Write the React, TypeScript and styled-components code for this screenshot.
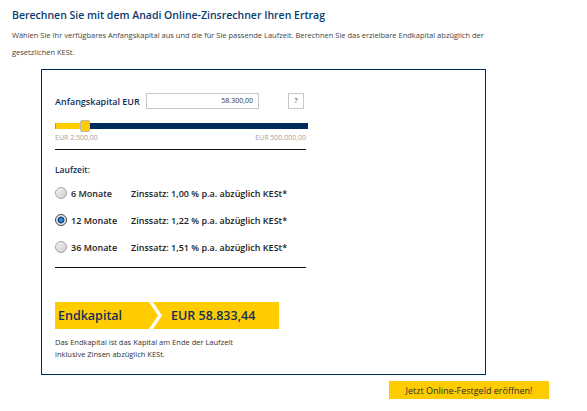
import React from "react";
import styled, { createGlobalStyle } from "styled-components";

const GlobalStyle = createGlobalStyle`
  html, body { margin: 0; padding: 0; background: #ffffff; }
  body { font-family: "Open Sans", "Noto Sans", Arial, sans-serif; }
  * { box-sizing: border-box; }
`;

const NAVY = "#002d5e";
const YELLOW = "#ffcc00";

const Page = styled.div`
  padding: 8px 0 0 12px;
  width: 549px;
  display: flex;
  flex-direction: column;
`;

const Title = styled.h1`
  margin: 0;
  font-size: 10.5px;
  line-height: 14px;
  font-weight: 600;
  color: #0a3b6e;
`;

const Intro = styled.p`
  margin: 5px 0 0 0;
  width: 480px;
  font-size: 7.5px;
  line-height: 16.5px;
  color: #444;
`;

const Calculator = styled.section`
  margin: 9px 0 0 29px;
  width: 445px;
  border: 1px solid ${NAVY};
  padding: 23px 13px 14px 13px;
  display: flex;
  flex-direction: column;
`;

const CapitalRow = styled.div`
  display: flex;
  align-items: center;
  height: 16px;
`;

const FieldLabel = styled.label`
  width: 91px;
  font-size: 9px;
  font-weight: 600;
  color: #10305a;
  white-space: nowrap;
`;

const AmountInput = styled.div`
  width: 113px;
  height: 16px;
  border: 1px solid #c8c8c8;
  font-size: 7px;
  line-height: 14px;
  color: #333;
  text-align: right;
  padding-right: 5px;
`;

const HelpButton = styled.div`
  margin-left: 29px;
  width: 16px;
  height: 16px;
  border: 1px solid #c8c8c8;
  font-size: 7px;
  line-height: 14px;
  text-align: center;
  color: #333;
`;

const Slider = styled.div`
  position: relative;
  margin-top: 11px;
  width: 253px;
  height: 12px;
  display: flex;
  align-items: center;
`;

const Track = styled.div`
  width: 100%;
  height: 6px;
  background: ${NAVY};
  border-left: 1px solid #9a9a9a;
  display: flex;
`;

const Fill = styled.div`
  height: 100%;
  background: ${YELLOW};
`;

const Thumb = styled.div`
  position: absolute;
  top: 0;
  width: 10px;
  height: 12px;
  background: ${YELLOW};
  border: 1px solid #b8b8b8;
  border-radius: 2px;
`;

const RangeLabels = styled.div`
  margin-top: 1px;
  width: 251px;
  display: flex;
  justify-content: space-between;
  font-size: 7px;
  line-height: 9px;
  color: #a0a0a0;
`;

const Rule = styled.hr<{ $gap: number }>`
  margin: ${(p) => p.$gap}px 0 0 0;
  width: 251px;
  border: 0;
  border-top: 1px solid #111;
  height: 0;
`;

const SectionLabel = styled.div`
  margin-top: 14px;
  font-size: 8.5px;
  line-height: 12px;
  font-weight: 600;
  color: #10305a;
`;

const Options = styled.div`
  margin-top: 10px;
  display: flex;
  flex-direction: column;
  gap: 13px;
`;

const OptionRow = styled.div`
  display: flex;
  align-items: center;
  height: 14px;
  font-size: 9px;
  font-weight: 600;
  color: #222;
  white-space: nowrap;
`;

const Radio = styled.span<{ $checked: boolean }>`
  width: 12px;
  height: 12px;
  border-radius: 50%;
  border: 1px solid ${(p) => (p.$checked ? "#4a4a4a" : "#a4a4a4")};
  background: ${(p) =>
    p.$checked
      ? "radial-gradient(circle at 50% 50%, #5aa7e8 0, #1f63b0 2.2px, #0d3f7a 3.2px, #e9e9e9 3.8px, #d2d2d2 100%)"
      : "linear-gradient(135deg, #f4f4f4 0%, #dcdcdc 60%, #cfcfcf 100%)"};
  margin-right: 4px;
  flex-shrink: 0;
`;

const Period = styled.span`
  width: 60px;
`;

const Rate = styled.span``;

const Result = styled.div`
  margin-top: 34px;
  display: flex;
  height: 27px;
`;

const ResultLabel = styled.div`
  width: 103px;
  height: 100%;
  background: ${YELLOW};
  clip-path: polygon(0 0, calc(100% - 9px) 0, 100% 50%, calc(100% - 9px) 100%, 0 100%);
  font-size: 12.5px;
  font-weight: 600;
  line-height: 27px;
  color: #13305a;
  padding-left: 3px;
`;

const ResultValue = styled.div`
  margin-left: -5px;
  width: 126px;
  height: 100%;
  background: ${YELLOW};
  clip-path: polygon(0 0, 100% 0, 100% 100%, 0 100%, 9px 50%);
  font-size: 12.5px;
  font-weight: 600;
  line-height: 27px;
  color: #13305a;
  padding-left: 18px;
`;

const ResultNote = styled.p`
  margin: 7px 0 0 0;
  width: 205px;
  font-size: 7.5px;
  line-height: 12px;
  color: #333;
`;

const Footer = styled.div`
  margin-top: 6px;
  display: flex;
  justify-content: flex-end;
`;

const CtaButton = styled.button`
  width: 160px;
  height: 18px;
  border: 0;
  padding: 0;
  background: ${YELLOW};
  font-family: "Open Sans", "Noto Sans", Arial, sans-serif;
  font-size: 9px;
  color: #2e2e2e;
  cursor: pointer;
`;

const options = [
  { months: 6, rate: "1,00" },
  { months: 12, rate: "1,22" },
  { months: 36, rate: "1,51" },
];

export default function App() {
  const min = 2500;
  const max = 500000;
  const value = 58300;
  const pct = (value - min) / (max - min);
  const fillPx = Math.round(pct * 253) + 2;
  const thumbLeft = fillPx - 5;

  return (
    <>
      <GlobalStyle />
      <Page>
        <Title>Berechnen Sie mit dem Anadi Online-Zinsrechner Ihren Ertrag</Title>
        <Intro>
          Wählen Sie Ihr verfügbares Anfangskapital aus und die für Sie passende Laufzeit. Berechnen Sie das
          erzielbare Endkapital abzüglich der gesetzlichen KESt.
        </Intro>
        <Calculator>
          <CapitalRow>
            <FieldLabel>Anfangskapital EUR</FieldLabel>
            <AmountInput>58.300,00</AmountInput>
            <HelpButton>?</HelpButton>
          </CapitalRow>
          <Slider>
            <Track>
              <Fill style={{ width: fillPx }} />
            </Track>
            <Thumb style={{ left: thumbLeft }} />
          </Slider>
          <RangeLabels>
            <span>EUR 2.500,00</span>
            <span>EUR 500.000,00</span>
          </RangeLabels>
          <Rule $gap={7} />
          <SectionLabel>Laufzeit:</SectionLabel>
          <Options>
            {options.map((o) => (
              <OptionRow key={o.months}>
                <Radio $checked={o.months === 12} />
                <Period>{o.months} Monate</Period>
                <Rate>Zinssatz: {o.rate} % p.a. abzüglich KESt*</Rate>
              </OptionRow>
            ))}
          </Options>
          <Rule $gap={13} />
          <Result>
            <ResultLabel>Endkapital</ResultLabel>
            <ResultValue>EUR 58.833,44</ResultValue>
          </Result>
          <ResultNote>
            Das Endkapital ist das Kapital am Ende der Laufzeit inklusive Zinsen abzüglich KESt.
          </ResultNote>
        </Calculator>
        <Footer>
          <CtaButton>Jetzt Online-Festgeld eröffnen!</CtaButton>
        </Footer>
      </Page>
    </>
  );
}
